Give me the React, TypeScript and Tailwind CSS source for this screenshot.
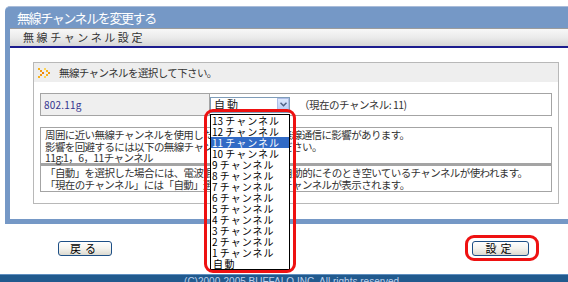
import React from "react";

const channels = ["13", "12", "11", "10", "9", "8", "7", "6", "5", "4", "3", "2", "1"];

function ArrowIcon() {
  return (
    <svg width="13" height="10" viewBox="0 0 13 10" className="shrink-0">
      <rect x="0" y="0" width="2" height="2" fill="#f7b21e" />
      <rect x="2" y="2" width="2" height="2" fill="#f39a12" />
      <rect x="4" y="4" width="2" height="2" fill="#ef7f0c" />
      <rect x="2" y="6" width="2" height="2" fill="#f39a12" />
      <rect x="0" y="8" width="2" height="2" fill="#f7b21e" />
      <rect x="6" y="0" width="2" height="2" fill="#fcd35a" />
      <rect x="8" y="2" width="2" height="2" fill="#f7b21e" />
      <rect x="10" y="4" width="2" height="2" fill="#f39a12" />
      <rect x="8" y="6" width="2" height="2" fill="#f7b21e" />
      <rect x="6" y="8" width="2" height="2" fill="#fcd35a" />
    </svg>
  );
}

function XpButton({ label, width }: { label: string; width: string }) {
  return (
    <div
      className={`${width} h-[15px] rounded-[3px] border border-[#1d4f86] bg-gradient-to-b from-white via-[#f4f3ee] to-[#dcdad0] flex items-center justify-center text-[11px] tracking-[4px] text-black leading-none`}
    >
      {label}
    </div>
  );
}

export default function App() {
  return (
    <div className="w-[568px] h-[282px] overflow-hidden bg-white relative font-['Noto_Sans_CJK_JP','Noto_Sans',sans-serif] text-[#222]">
      <div className="pt-[6px] pl-[5px]">
        <div className="w-[600px]">
          {/* title */}
          <div className="h-[22px] bg-[#7598c6] border-t border-[#a9bcd9] rounded-tl-[5px] flex items-center pl-[12px] text-white text-[13px] tracking-[-1.4px]">
            無線チャンネルを変更する
          </div>

          <div className="border-l-[5px] border-b-[5px] border-[#7598c6]">
            {/* sub header */}
            <div className="h-[18px] border-t border-[#9c9c9c] bg-gradient-to-b from-[#f8f8f8] via-[#ebebeb] to-[#d6d6d6] flex items-center pl-[13px] text-[11px] tracking-[2.6px] text-[#333]">
              無線チャンネル設定
            </div>
            <div className="h-[2px] bg-[#1c1c8e]" />

            <div className="pt-[14px] pl-[23px] pb-[15px]">
              <div className="w-[526px] h-[142px] border border-[#b8b8b8]">
                <div className="h-[19px] bg-[#eeeeee] flex items-center gap-[8px] pl-[4px] text-[10.5px] tracking-[-0.6px] text-[#333]">
                  <ArrowIcon />
                  <span>無線チャンネルを選択して下さい。</span>
                </div>

                <div className="px-[6px] pt-[11px]">
                  {/* 802.11g row */}
                  <div className="h-[23px] border border-[#a4a4a4] flex">
                    <div className="w-[169px] bg-[#efefef] border-r border-[#a4a4a4] flex items-center pl-[3px] text-[10px] text-[#35358f] tracking-[0.2px]">
                      802.11g
                    </div>
                    <div className="flex-1 flex items-center">
                      <div className="relative w-[80px] h-[16px] border border-[#7f9db9] bg-white flex items-center">
                        <span className="pl-[3px] text-[11px] tracking-[2px] leading-none flex-1">自動</span>
                        <div className="w-[12px] h-[14px] bg-gradient-to-b from-[#dde8fd] to-[#b4c9f3] border border-[#aebde6] flex items-center justify-center">
                          <svg width="7" height="5" viewBox="0 0 7 5">
                            <path d="M0.5 0.8 L3.5 3.8 L6.5 0.8" stroke="#4d6185" strokeWidth="1.5" fill="none" />
                          </svg>
                        </div>

                        {/* open list */}
                        <div className="absolute left-[-1px] top-[16px] w-[80px] border border-black bg-white z-10">
                          {channels.map((c) => (
                            <div
                              key={c}
                              className={`h-[11px] leading-[11px] pl-[1px] text-[10px] whitespace-nowrap ${
                                c === "11" ? "bg-[#316ac5] text-white" : "text-black"
                              }`}
                            >
                              {c} <span className="tracking-[1px]">チャンネル</span>
                            </div>
                          ))}
                          <div className="h-[11px] leading-[11px] pl-[2px] text-[10px] tracking-[1.5px] text-black">自動</div>
                        </div>

                        {/* annotation */}
                        <div className="absolute left-[-7px] top-[11px] w-[92px] h-[164px] border-[3px] border-[#ee1111] rounded-[9px] z-20 pointer-events-none" />
                      </div>
                      <span className="ml-[9px] text-[10.5px] tracking-[-0.5px] text-[#333]">（現在のチャンネル: 11)</span>
                    </div>
                  </div>

                  {/* notes */}
                  <div className="mt-[11px] border border-[#a4a4a4] h-[37px] px-[4px] pt-[1px] text-[10.5px] leading-[11.5px] tracking-[-0.6px] text-[#333] whitespace-nowrap">
                    <div>周囲に近い無線チャンネルを使用した機器があると、無線通信に影響があります。</div>
                    <div>影響を回避するには以下の無線チャンネルをお使いください。</div>
                    <div>11g:1，6，11チャンネル</div>
                  </div>
                  <div className="border border-t-2 border-[#a4a4a4] h-[28px] px-[4px] pt-[1px] text-[10.5px] leading-[11.5px] tracking-[-0.6px] text-[#333] whitespace-nowrap">
                    <div>「自動」を選択した場合には、電波混雑の状況により自動的にそのとき空いているチャンネルが使われます。</div>
                    <div>「現在のチャンネル」には「自動」選択時に使用中のチャンネルが表示されます。</div>
                  </div>
                </div>
              </div>
            </div>
          </div>
        </div>
      </div>

      {/* buttons */}
      <div className="h-[50px] flex items-start justify-between pl-[58px] pr-[39px] pt-[17px]">
        <XpButton label="戻る" width="w-[54px]" />
        <div className="relative">
          <XpButton label="設定" width="w-[57px]" />
          <div className="absolute left-[-7px] top-[-6px] w-[74px] h-[26px] border-[3px] border-[#ee1111] rounded-[9px] pointer-events-none" />
        </div>
      </div>

      {/* footer */}
      <div className="h-[20px] bg-[#215a8e] border-t border-[#5f8fc0] flex justify-center pl-[18px] pt-[1px] text-[10px] text-[#bcd0ec] font-['Liberation_Sans',sans-serif] leading-[12px]">
        (C)2000-2005 BUFFALO INC. All rights reserved.
      </div>
    </div>
  );
}
